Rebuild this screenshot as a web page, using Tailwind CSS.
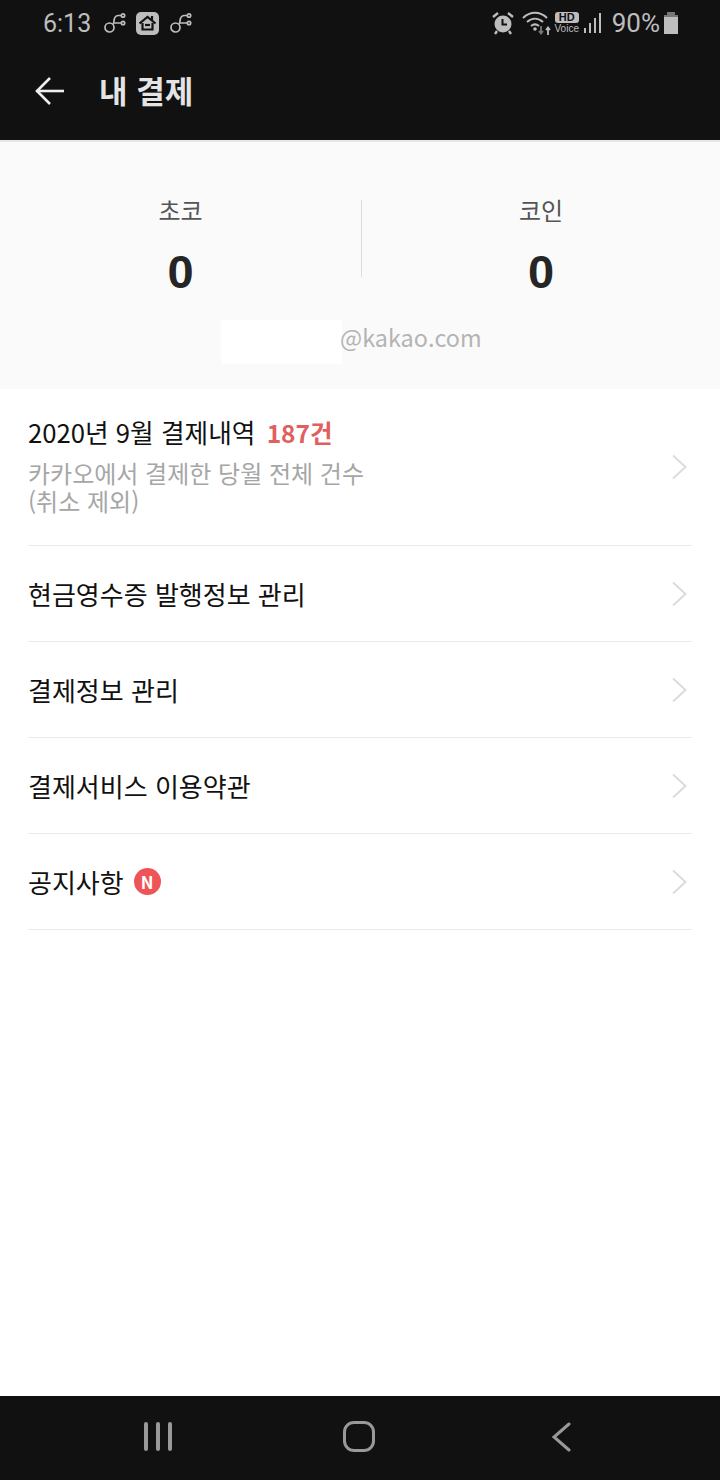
<!DOCTYPE html>
<html lang="ko">
  <head>
    <meta charset="UTF-8" />
    <meta name="viewport" content="width=device-width, initial-scale=1.0" />
    <title>내 결제</title>
    <script src="https://cdn.jsdelivr.net/npm/@tailwindcss/browser@4"></script>
  </head>
  <body class="bg-white font-['Noto_Sans_CJK_KR',sans-serif]">
    <div class="w-[720px] h-[1480px] flex flex-col overflow-hidden">

      <!-- Status bar + title bar -->
      <div class="h-[140px] bg-[#111111] shrink-0">
        <div class="h-[46px] flex items-center justify-between pl-[43px] pr-[42px] font-['Roboto',sans-serif]">
          <div class="flex items-center text-[#bdbdbd]">
            <span class="text-[25px] leading-none w-[60px]">6:13</span>
            <svg class="w-[23px] h-[22px]" viewBox="0 0 23 22" fill="none" stroke="#bdbdbd" stroke-width="1.700">
              <circle cx="6.500" cy="15.500" r="4.500" /><circle cx="20" cy="3.500" r="1.700" /><circle cx="20" cy="11" r="1.700" />
              <path d="M10 12.500c1-1.500 .8-3 1.200-5 .5-2.500 2-4 4.300-4h2.800M11 11h7.300" />
            </svg>
            <div class="ml-[10px] w-[23px] h-[23px] rounded-[5px] bg-[#bdbdbd] flex items-center justify-center">
              <svg class="w-[19px] h-[19px]" viewBox="0 0 19 19" fill="none" stroke="#111111" stroke-width="2.200">
                <path d="M1.500 9.500L9.500 3l8 6.500" /><path d="M4.500 9v6.500h10V9" /><path d="M14 2v4" />
                <path d="M7 11h5" />
              </svg>
            </div>
            <svg class="ml-[10px] w-[23px] h-[22px]" viewBox="0 0 23 22" fill="none" stroke="#bdbdbd" stroke-width="1.700">
              <circle cx="6.500" cy="15.500" r="4.500" /><circle cx="20" cy="3.500" r="1.700" /><circle cx="20" cy="11" r="1.700" />
              <path d="M10 12.500c1-1.500 .8-3 1.200-5 .5-2.500 2-4 4.300-4h2.800M11 11h7.300" />
            </svg>
          </div>
          <div class="flex items-center text-[#bdbdbd]">
            <svg class="w-[24px] h-[24px]" viewBox="0 0 24 24" fill="none">
              <circle cx="12" cy="13" r="8.500" fill="#bdbdbd" />
              <path d="M11.500 8v5.500h4.500" stroke="#111111" stroke-width="2" />
              <path d="M2 6l5-4M22 6l-5-4M6 20l-2 3M18 20l2 3" stroke="#bdbdbd" stroke-width="2.400" />
            </svg>
            <svg class="ml-[7px] w-[30px] h-[24px]" viewBox="0 0 30 24" fill="none">
              <path d="M1 7c7-7 17-7 24 0M5 11c5-4.500 11-4.500 16 0M9 15c2.500-2 5.500-2 8 0" stroke="#bdbdbd" stroke-width="2" />
              <circle cx="13" cy="18" r="1.800" fill="#bdbdbd" />
              <path d="M19 15v7M17 20l2 2.500 2-2.500" stroke="#777777" stroke-width="1.800" />
              <path d="M26 24v-7M24 19l2-2.500 2 2.500" stroke="#bdbdbd" stroke-width="1.800" />
            </svg>
            <div class="ml-[3px] w-[24px] flex flex-col items-center font-['Liberation_Sans',sans-serif]">
              <div class="w-[24px] h-[11px] rounded-[3px] bg-[#bdbdbd] text-[#111111] text-[11px] leading-[11px] font-bold text-center">HD</div>
              <div class="text-[10px] leading-[11px]">Voice</div>
            </div>
            <div class="ml-[5px] w-[18px] h-[20px] flex items-end gap-[2.500px]">
              <div class="w-[2.500px] h-[5px] bg-[#bdbdbd]"></div>
              <div class="w-[2.500px] h-[10px] bg-[#bdbdbd]"></div>
              <div class="w-[2.500px] h-[15px] bg-[#bdbdbd]"></div>
              <div class="w-[2.500px] h-[20px] bg-[#bdbdbd]"></div>
            </div>
            <span class="ml-[10px] text-[26px] leading-none">90%</span>
            <div class="ml-[4px] w-[14px] h-[22px] flex flex-col items-center">
              <div class="w-[8px] h-[3px] bg-[#777777]"></div>
              <div class="w-[14px] h-[2px] bg-[#777777]"></div>
              <div class="w-[14px] h-[17px] bg-[#bdbdbd]"></div>
            </div>
          </div>
        </div>
        <div class="h-[90px] flex items-center pl-[35px]">
          <svg class="w-[29px] h-[28px] shrink-0" viewBox="0 0 29 28" fill="none" stroke="#eeeeee" stroke-width="2.600">
            <path d="M1.500 14h27.500" /><path d="M15 1L2 14l13 13" />
          </svg>
          <h1 class="ml-[35px] -mt-[4px] text-[31px] leading-none font-bold text-[#e4e4e4]">내 결제</h1>
        </div>
      </div>

      <!-- Summary -->
      <div class="h-[249px] shrink-0 bg-[#fafafa] border-t-2 border-[#e6e6e6]">
        <div class="pt-[58px] flex">
          <div class="w-[361px] h-[110px] flex flex-col items-center">
            <span class="-mt-[2px] text-[24px] leading-[24px] text-[#555555]">초코</span>
            <span class="mt-[25px] text-[47px] leading-[50px] font-bold text-[#252525] font-['Liberation_Sans',sans-serif]">0</span>
          </div>
          <div class="w-px h-[77px] bg-[#dddddd]"></div>
          <div class="flex-1 h-[110px] flex flex-col items-center">
            <span class="-mt-[2px] text-[24px] leading-[24px] text-[#555555]">코인</span>
            <span class="mt-[25px] text-[47px] leading-[50px] font-bold text-[#252525] font-['Liberation_Sans',sans-serif]">0</span>
          </div>
        </div>
        <div class="mt-[10px] ml-[221px] flex items-center h-[44px]">
          <div class="w-[121px] h-[44px] bg-white"></div>
          <span class="-ml-[2px] -mt-[9px] text-[23.400px] leading-none text-[#b4b4b4]">@kakao.com</span>
        </div>
      </div>

      <!-- Menu rows -->
      <div class="px-[28px]">
        <div class="h-[157px] border-b border-[#ebebeb] flex items-center justify-between">
          <div class="-mt-[3px]">
            <div class="text-[25.700px] leading-[30px] text-[#111111]">2020년 9월 결제내역 <span class="ml-[4px] text-[24.500px] font-bold text-[#e05f5f]">187건</span></div>
            <div class="mt-[11px] text-[24px] leading-[28px] text-[#a6a6a6]">카카오에서 결제한 당월 전체 건수<br />(취소 제외)</div>
          </div>
          <svg class="w-[16px] h-[26px] mr-[5px] shrink-0" viewBox="0 0 16 26" fill="none" stroke="#dcdcdc" stroke-width="2"><path d="M2 1.500L14.500 13 2 24.500" /></svg>
        </div>
        <div class="h-[96px] border-b border-[#ebebeb] flex items-center justify-between">
          <span class="text-[26px] leading-none text-[#111111]">현금영수증 발행정보 관리</span>
          <svg class="w-[16px] h-[26px] mr-[5px] shrink-0" viewBox="0 0 16 26" fill="none" stroke="#dcdcdc" stroke-width="2"><path d="M2 1.500L14.500 13 2 24.500" /></svg>
        </div>
        <div class="h-[96px] border-b border-[#ebebeb] flex items-center justify-between">
          <span class="text-[26px] leading-none text-[#111111]">결제정보 관리</span>
          <svg class="w-[16px] h-[26px] mr-[5px] shrink-0" viewBox="0 0 16 26" fill="none" stroke="#dcdcdc" stroke-width="2"><path d="M2 1.500L14.500 13 2 24.500" /></svg>
        </div>
        <div class="h-[96px] border-b border-[#ebebeb] flex items-center justify-between">
          <span class="text-[26px] leading-none text-[#111111]">결제서비스 이용약관</span>
          <svg class="w-[16px] h-[26px] mr-[5px] shrink-0" viewBox="0 0 16 26" fill="none" stroke="#dcdcdc" stroke-width="2"><path d="M2 1.500L14.500 13 2 24.500" /></svg>
        </div>
        <div class="h-[96px] border-b border-[#ebebeb] flex items-center justify-between">
          <div class="flex items-center">
            <span class="text-[26px] leading-none text-[#111111]">공지사항</span>
            <span class="ml-[10px] w-[27px] h-[27px] rounded-full bg-[#ee5558] text-white text-[17px] leading-none font-bold flex items-center justify-center">N</span>
          </div>
          <svg class="w-[16px] h-[26px] mr-[5px] shrink-0" viewBox="0 0 16 26" fill="none" stroke="#dcdcdc" stroke-width="2"><path d="M2 1.500L14.500 13 2 24.500" /></svg>
        </div>
      </div>

      <!-- Android nav bar -->
      <div class="mt-auto h-[84px] shrink-0 bg-[#111111] flex items-center pl-[144px] pb-[3px]">
        <div class="flex gap-[8px]">
          <div class="w-[4px] h-[29px] rounded-full bg-[#999999]"></div>
          <div class="w-[4px] h-[29px] rounded-full bg-[#999999]"></div>
          <div class="w-[4px] h-[29px] rounded-full bg-[#999999]"></div>
        </div>
        <div class="ml-[171px] w-[32px] h-[31px] rounded-[11px] border-[3px] border-[#999999]"></div>
        <svg class="ml-[176px] w-[20px] h-[30px]" viewBox="0 0 20 30" fill="none" stroke="#999999" stroke-width="3" stroke-linecap="round"><path d="M18 2L3 15l15 13" /></svg>
      </div>
    </div>
  </body>
</html>
